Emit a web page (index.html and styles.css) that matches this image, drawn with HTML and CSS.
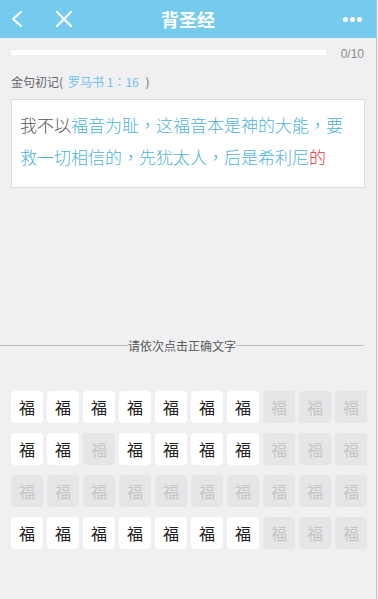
FILE: index.html
```html
<!DOCTYPE html>
<html lang="zh-CN">
<head>
    <meta charset="UTF-8">
    <meta name="viewport" content="width=device-width, initial-scale=1.0">
    <title>背圣经</title>
    <link rel="stylesheet" href="styles.css">
</head>
<body>
    <div class="app">
        <div class="top-bar">
            <div class="top-left">
                <svg class="icon" width="16" height="18" viewBox="0 0 16 18">
                    <path d="M11 2 L3 9 L11 16" fill="none" stroke="#fff" stroke-width="2.2" stroke-linecap="round" stroke-linejoin="round"/>
                </svg>
                <svg class="icon close" width="18" height="18" viewBox="0 0 18 18">
                    <path d="M2 2 L16 16 M16 2 L2 16" fill="none" stroke="#fff" stroke-width="2.2" stroke-linecap="round"/>
                </svg>
            </div>
            <h1>背圣经</h1>
            <div class="dots"><span></span><span></span><span></span></div>
        </div>

        <div class="progress-row">
            <div class="progress"></div>
            <div class="count">0/10</div>
        </div>

        <div class="verse-label">金句初记(<span class="ref" lang="zh-TW">罗马书 1：16</span> )</div>

        <div class="verse-card" lang="zh-TW">
            <span class="done">我不以</span><span class="todo">福音为耻，这福音本是神的大能，要救一切相信的，先犹太人，后是希利尼</span><span class="wrong">的</span>
        </div>

        <div class="divider"><span>请依次点击正确文字</span></div>

        <div class="board">
            <div class="key">福</div><div class="key">福</div><div class="key">福</div><div class="key">福</div><div class="key">福</div><div class="key">福</div><div class="key">福</div><div class="key off">福</div><div class="key off">福</div><div class="key off">福</div>

            <div class="key">福</div><div class="key">福</div><div class="key off">福</div><div class="key">福</div><div class="key">福</div><div class="key">福</div><div class="key">福</div><div class="key off">福</div><div class="key off">福</div><div class="key off">福</div>

            <div class="key off">福</div><div class="key off">福</div><div class="key off">福</div><div class="key off">福</div><div class="key off">福</div><div class="key off">福</div><div class="key off">福</div><div class="key off">福</div><div class="key off">福</div><div class="key off">福</div>

            <div class="key">福</div><div class="key">福</div><div class="key">福</div><div class="key">福</div><div class="key">福</div><div class="key">福</div><div class="key">福</div><div class="key off">福</div><div class="key off">福</div><div class="key off">福</div>
        </div>
    </div>
</body>
</html>
```

FILE: styles.css
```css
body {
    margin: 0;
    background: #f0eff2;
    font-family: "Liberation Sans", "Noto Sans CJK SC", sans-serif;
}

.app {
    width: 376px;
    height: 599px;
    background: #f0eff2;
    border-right: 1px solid #c9c9cc;
    overflow: hidden;
}

.top-bar {
    height: 38px;
    background: #74cbed;
    display: flex;
    align-items: center;
    justify-content: space-between;
    padding: 0 14px 0 10px;
    position: relative;
}

.top-left {
    display: flex;
    align-items: center;
    gap: 29px;
}

.top-left .icon {
    display: block;
}

.top-bar h1 {
    position: absolute;
    left: 0;
    right: 0;
    margin: 0;
    text-align: center;
    font-size: 18px;
    font-weight: bold;
    color: #fff;
    font-family: "Noto Sans CJK SC", sans-serif;
    pointer-events: none;
}

.dots {
    display: flex;
    gap: 2px;
}

.dots span {
    width: 5px;
    height: 5px;
    border-radius: 50%;
    background: #fff;
}

.progress-row {
    display: flex;
    align-items: center;
    padding: 0 12px 0 11px;
    height: 28px;
}

.progress {
    width: 315px;
    height: 5px;
    background: #fff;
}

.count {
    margin-left: auto;
    margin-top: 3px;
    font-size: 12px;
    color: #8a8a8a;
}

.verse-label {
    margin: 8px 0 0 11px;
    font-size: 12px;
    color: #666;
    font-family: "Noto Sans CJK SC", sans-serif;
    line-height: 16px;
}

.verse-label .ref {
    color: #6ec3e8;
    margin: 0 4px 0 5px;
    font-family: "Noto Sans CJK TC", sans-serif;
}

.verse-card {
    margin: 9px 11px 0 11px;
    background: #fff;
    border: 1px solid #dcdcdc;
    padding: 9px 8px 14px 8px;
    font-size: 17px;
    line-height: 32px;
    font-family: "Noto Sans CJK TC", sans-serif;
    font-weight: 300;
}

.verse-card .done {
    color: #555;
}

.verse-card .todo {
    color: #4db3d8;
}

.verse-card .wrong {
    color: #e8323c;
}

.divider {
    display: flex;
    align-items: center;
    margin: 149px 12px 0 0;
    font-size: 12px;
    color: #5a5a5a;
    font-family: "Noto Sans CJK SC", sans-serif;
}

.divider::before,
.divider::after {
    content: "";
    flex: 1;
    height: 1px;
    background: #bcbcbc;
}

.board {
    display: grid;
    grid-template-columns: repeat(10, 32px);
    grid-auto-rows: 32px;
    column-gap: 4px;
    row-gap: 10px;
    margin: 37px 0 0 11px;
}

.key {
    background: #fff;
    border-radius: 4px;
    display: flex;
    align-items: center;
    justify-content: center;
    font-size: 16px;
    color: #222;
    font-family: "Noto Sans CJK SC", sans-serif;
}

.key.off {
    background: #e6e5e7;
    color: #c6c6c6;
}
```
